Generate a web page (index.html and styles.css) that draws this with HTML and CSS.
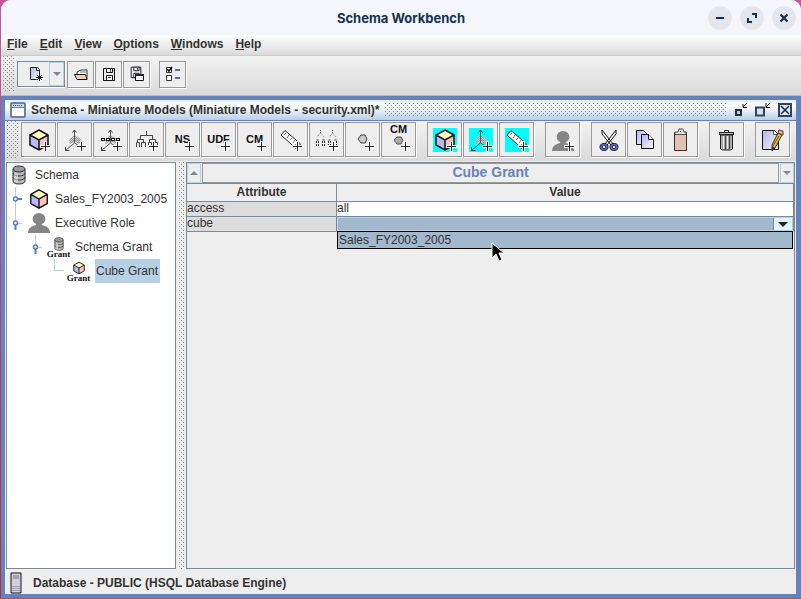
FILE: index.html
```html
<!DOCTYPE html>
<html lang="en">
<head>
  <meta charset="UTF-8" />
  <meta name="viewport" content="width=device-width, initial-scale=1.0" />
  <title>Schema Workbench</title>
  <link rel="stylesheet" href="styles.css">
</head>
<body>
  <!-- shared icon parts -->
  <svg class="defs" width="0" height="0" aria-hidden="true">
    <defs>
      <pattern id="dither" width="2" height="2" patternUnits="userSpaceOnUse">
        <path d="M0 0h1v1H0zM1 1h1v1H1z" fill="#999" />
      </pattern>
      <linearGradient id="page" x1="0" y1="0" x2="1" y2="1">
        <stop offset="0" stop-color="#b5b5e8" /><stop offset="1" stop-color="#f4f4ff" />
      </linearGradient>
      <symbol id="plus" viewBox="0 0 24 24">
        <path d="M18.5 13v11M13 18.5h11" stroke="#fff" stroke-width="3" />
        <path d="M18.5 14v9M14 18.5h9" stroke="#222" />
      </symbol>
      <symbol id="cube" viewBox="0 0 24 24">
        <path d="M12 2l9 5-9 5-9-5z" fill="#ffffc0" />
        <path d="M3 7l9 5v10l-9-5z" fill="#b9b9f5" />
        <path d="M21 7l-9 5v10l9-5z" fill="#ffc0c0" />
        <path d="M12 2l9 5v10l-9 5-9-5V7zM3 7l9 5 9-5M12 12v10" fill="none" stroke="#111" stroke-width="1.5" />
      </symbol>
      <symbol id="axes" viewBox="0 0 24 24">
        <path d="M11.5 7l6 4v5l-6-2-5 2v-5z" fill="#ccc" />
        <path d="M11.5 7l6 4v5l-6-2-5 2v-5z" fill="url(#dither)" />
        <path d="M11.5 2v13L3 22M11.5 15l9 6" fill="none" stroke="#555" />
        <path d="M9.5 4.5l2-2.5 2 2.5M2.5 19v3.5h4" fill="none" stroke="#444" />
      </symbol>
      <symbol id="ruler" viewBox="0 0 24 24">
        <path d="M6 2.5L21.5 16l-4.500 4.5L2 7z" fill="#fff" stroke="#222" />
        <path d="M7 5L5 7M10 7l-2 3M13 10l-2 2M16 12l-2 3M18 15l-2 2" stroke="#777" />
      </symbol>
      <symbol id="person" viewBox="0 0 24 24">
        <ellipse cx="12" cy="7.5" rx="7" ry="6.5" fill="#858585" />
        <path d="M9 12h6v2l5 2q4 2 4 7H0q0-5 4-7l5-2z" fill="#858585" />
      </symbol>
      <symbol id="database" viewBox="0 0 16 20">
        <path d="M2 4v12c0 4 12 4 12 0V4" fill="#b9b9b9" stroke="#333" />
        <ellipse cx="8" cy="4" rx="6" ry="3" fill="#999" stroke="#333" />
        <path d="M2 8c0 4 12 4 12 0M2 12c0 4 12 4 12 0" fill="none" stroke="#333" />
        <path d="M4 8v9M6 9v9" stroke="#e9e9e9" />
      </symbol>
      <symbol id="disk" viewBox="0 0 16 16">
        <path d="M2.5 2.5h11v12h-11z" fill="#eee" stroke="#111" />
        <path d="M5.5 2.5h6v4h-6zM5.5 9.5h6v5h-6z" fill="#fff" stroke="#111" />
        <path d="M9 3h1v3H9zM7 11h3v1H7z" fill="#333" />
      </symbol>
      <symbol id="closed" viewBox="0 0 10 24">
        <path d="M3.5 0v24" stroke="#b8cfe5" />
        <circle cx="3.5" cy="12" r="2" fill="#fff" stroke="#5c7dbd" stroke-width="1.5" />
        <path d="M5 12h5" stroke="#5c7dbd" stroke-width="2" />
      </symbol>
      <symbol id="opened" viewBox="0 0 10 24">
        <path d="M3.5 0v10M6 12.5h4" stroke="#b8cfe5" />
        <circle cx="3.5" cy="12" r="2" fill="#fff" stroke="#5c7dbd" stroke-width="1.5" />
        <path d="M3.5 14v5" stroke="#5c7dbd" stroke-width="2" />
      </symbol>
    </defs>
  </svg>

  <div class="window">
    <header class="titlebar">
      <h1>Schema Workbench</h1>
      <div class="window-buttons">
        <button aria-label="Minimize"><svg width="12" height="12" viewBox="0 0 12 12"><path d="M2 6h8" stroke="#16324f" stroke-width="2" /></svg></button>
        <button aria-label="Restore"><svg width="12" height="12" viewBox="0 0 12 12"><path d="M6 2h4v4M2 6v4h4" fill="none" stroke="#16324f" stroke-width="2" /></svg></button>
        <button aria-label="Close"><svg width="12" height="12" viewBox="0 0 12 12"><path d="M2.5 2.5l7 7M9.5 2.5l-7 7" stroke="#16324f" stroke-width="2.2" /></svg></button>
      </div>
    </header>

    <nav class="menubar">
      <a href="#"><u>F</u>ile</a>
      <a href="#"><u>E</u>dit</a>
      <a href="#"><u>V</u>iew</a>
      <a href="#"><u>O</u>ptions</a>
      <a href="#"><u>W</u>indows</a>
      <a href="#"><u>H</u>elp</a>
    </nav>

    <div class="toolbar main-toolbar">
      <span class="grip"></span>
      <div class="split-button">
        <button class="new" aria-label="New"><svg width="16" height="16" viewBox="0 0 16 16"><path d="M2.5 1.5h7l2 2v10h-9z" fill="url(#page)" stroke="#222" /><path d="M8.5 1.5v3h3" fill="#fff" stroke="#222" /><path d="M11.5 8v7M8 11.5h7M9 9l5 5M14 9l-5 5" stroke="#fff" stroke-width="2.5" /><path d="M11.5 8v7M8 11.5h7M9 9l5 5M14 9l-5 5" stroke="#222" /></svg></button>
        <button class="drop" aria-label="New item list"><svg width="8" height="4" viewBox="0 0 8 4"><path d="M0 0h8L4 4z" fill="#7a8a99" /></svg></button>
      </div>
      <button class="tool" aria-label="Open"><svg width="16" height="16" viewBox="0 0 16 16"><path d="M4 8V6l4-2h6v9" fill="#fff" stroke="#333" /><path d="M1.5 8.5h11l1.500 5H4z" fill="#f3cfb2" stroke="#111" /><path d="M7 6h6" stroke="#777" /></svg></button>
      <button class="tool" aria-label="Save"><svg width="16" height="16"><use href="#disk" /></svg></button>
      <button class="tool" aria-label="Save as"><svg width="16" height="16" viewBox="0 0 16 16"><use href="#disk" x="0" y="-1" width="14" height="14" /><path d="M6.5 8.5h8v6h-8z" fill="#fff" stroke="#111" /><path d="M6 8h9v2H6z" fill="#224" /></svg></button>
      <button class="tool prefs" aria-label="Preferences"><svg width="16" height="16" viewBox="0 0 16 16"><path d="M1.5 1.5h5v5h-5zM1.5 9.5h5v5h-5z" fill="#fff" stroke="#333" /><path d="M2 3l2 2 3-4" fill="none" stroke="#000" stroke-width="1.5" /><path d="M10 4h5M10 12h5" stroke="#6666a0" stroke-width="2" /></svg></button>
    </div>

    <main class="desktop">
      <section class="frame">
        <div class="frame-title">
          <svg width="16" height="16" viewBox="0 0 16 16"><rect x="1" y="1" width="14" height="14" rx="1" fill="#fff" stroke="#6f8299" stroke-width="2" /><path d="M2 2h12v3H2z" fill="#c5d8ea" /><path d="M3 3.5h10" stroke="#4a6078" stroke-dasharray="1 1" /><path d="M2 5.5h12" stroke="#6f8299" /></svg>
          <h2>Schema - Miniature Models (Miniature Models - security.xml)*</h2>
          <span class="bumps"></span>
          <div class="frame-buttons">
            <button aria-label="Iconify"><svg width="16" height="16" viewBox="0 0 16 16"><path d="M3 8h5v5H3z" fill="#b8cfe5" stroke="#1d3040" stroke-width="2" /><path d="M14 1l-4 4M10 2v3.5h4" fill="none" stroke="#111" /></svg></button>
            <button aria-label="Maximize"><svg width="16" height="16" viewBox="0 0 16 16"><path d="M0 5h8v8H0z" transform="translate(1 .5)" fill="#d5e3f0" stroke="#30445a" stroke-width="2" /><path d="M15 1l-4 4M11 1v4.500h4" fill="none" stroke="#111" /></svg></button>
            <button aria-label="Close schema"><svg width="16" height="16" viewBox="0 0 16 16"><path d="M2 2h12v12H2z" fill="#dce8f4" stroke="#30445a" stroke-width="2" /><path d="M4 4l8 8M12 4l-8 8" stroke="#142538" stroke-width="1.5" /></svg></button>
          </div>
        </div>

        <div class="toolbar schema-toolbar">
          <span class="grip"></span>
          <div class="group">
            <button class="tool" aria-label="Add cube"><svg width="24" height="24"><use href="#cube" /><use href="#plus" /></svg></button>
            <button class="tool" aria-label="Add dimension"><svg width="24" height="24"><use href="#axes" /><use href="#plus" /></svg></button>
            <button class="tool" aria-label="Add dimension usage"><svg width="24" height="24"><use href="#axes" /><path d="M2 11.5h19" stroke="#111" stroke-width="3" stroke-dasharray="4 1" /><path d="M3 11.5h17" stroke="#fff" stroke-dasharray="2 3" /><use href="#plus" /></svg></button>
            <button class="tool" aria-label="Add hierarchy"><svg width="24" height="24"><path d="M11.5 3v4M5.5 11V7.5h12V11M2.5 14v-2.5h6V14M14.5 14v-2.5h6V14M1.5 19v-4.500h3V19M6.5 19v-4.500h4V19M13.5 19v-4.500h3V19M18.5 19v-4.500h4V19" fill="none" stroke="#444" /><use href="#plus" /></svg></button>
            <button class="tool word"><span>NS</span><svg width="24" height="24" aria-hidden="true"><use href="#plus" /></svg></button>
            <button class="tool word"><span>UDF</span><svg width="24" height="24" aria-hidden="true"><use href="#plus" /></svg></button>
            <button class="tool word"><span>CM</span><svg width="24" height="24" aria-hidden="true"><use href="#plus" /></svg></button>
            <button class="tool" aria-label="Add measure"><svg width="24" height="24"><use href="#ruler" /><use href="#plus" /></svg></button>
            <button class="tool" aria-label="Add level"><svg width="24" height="24"><path d="M5.5 2v3L2 9M5.5 5L9 9M17.5 2v3L14 9M17.5 5L21 9" fill="none" stroke="#777" stroke-dasharray="1 1" /><path d="M1.5 18v-6h2v6M7.5 18v-6h2v6M13.5 18v-6h2v6M19.5 18v-6h2v6" fill="none" stroke="#333" stroke-dasharray="2 1" /><use href="#plus" /></svg></button>
            <button class="tool" aria-label="Add property"><svg width="24" height="24"><path d="M10 7h4l2 4-2 4h-4l-3-4z" fill="#c9c9c9" stroke="#444" /><use href="#plus" /></svg></button>
            <button class="tool word high"><span>CM</span><svg width="24" height="24" aria-hidden="true"><path d="M10 9h4l2 3-2 4h-4l-3-4z" fill="#aaa" stroke="#555" /><use href="#plus" /></svg></button>
          </div>
          <div class="group">
            <button class="tool cyan" aria-label="Add virtual cube"><svg width="24" height="24"><use href="#cube" /><use href="#plus" /></svg></button>
            <button class="tool cyan" aria-label="Add virtual cube dimension"><svg width="24" height="24"><use href="#axes" /><use href="#plus" /></svg></button>
            <button class="tool cyan" aria-label="Add virtual cube measure"><svg width="24" height="24"><use href="#ruler" /><use href="#plus" /></svg></button>
          </div>
          <div class="group">
            <button class="tool" aria-label="Add role"><svg width="24" height="24"><use href="#person" x="1" y="2" width="22" height="22" /><use href="#plus" /></svg></button>
          </div>
          <div class="group">
            <button class="tool" aria-label="Cut"><svg width="24" height="24"><path d="M5 2v4l9 11 2-1zM19 2v4l-9 11-2-1z" fill="#fff" stroke="#111" /><ellipse cx="7" cy="19" rx="3" ry="2.5" fill="#fff" stroke="#111" stroke-width="3" /><ellipse cx="17" cy="19" rx="3" ry="2.5" fill="#fff" stroke="#111" stroke-width="3" /><ellipse cx="7" cy="19" rx="3" ry="2.5" fill="none" stroke="#6666c8" stroke-width="1.5" /><ellipse cx="17" cy="19" rx="3" ry="2.5" fill="none" stroke="#6666c8" stroke-width="1.5" /></svg></button>
            <button class="tool" aria-label="Copy"><svg width="24" height="24"><path d="M3.5 2.5h7l4 4v10h-11z" fill="url(#page)" stroke="#111" /><path d="M8.5 6.5h7l5 5v9h-12z" fill="url(#page)" stroke="#111" /><path d="M15.5 6.5v5h5" fill="#fff" stroke="#111" /></svg></button>
            <button class="tool" aria-label="Paste"><svg width="24" height="24"><path d="M5.5 4.5h12v18h-12z" fill="#dcc5b5" stroke="#5b2020" /><path d="M6 6.5V4h3l1-3h4l1 3h2v2.5z" fill="#ddd" stroke="#555" /><path d="M11 3h1v1h-1z" fill="#333" /></svg></button>
          </div>
          <div class="group">
            <button class="tool" aria-label="Delete"><svg width="24" height="24"><path d="M5.5 7h12v14l-2 1h-8l-2-1z" fill="#aaa" stroke="#222" /><path d="M4 5.5h15" stroke="#222" stroke-width="3" /><path d="M5 5.5h13" stroke="#bbb" /><path d="M9.5 4V2.5h4V4" fill="none" stroke="#222" /><path d="M8.5 8v13M12.5 8v13" stroke="#eee" /><path d="M10.5 8v13M14.5 8v13" stroke="#444" /></svg></button>
          </div>
          <div class="group">
            <button class="tool" aria-label="Edit XML"><svg width="24" height="24"><path d="M1.5 2.5h12l4 4v15h-16z" fill="url(#page)" stroke="#111" /><path d="M12.5 2.5v4h4" fill="#fff" stroke="#555" /><path d="M17 5l4 2-7 13-3 3v-6z" fill="#e6bd36" stroke="#333" /><path d="M18 2l4 1v4l-5-2z" fill="#efb0a0" stroke="#533" /><path d="M11 18l3 2-3 3z" fill="#333" /><path d="M18 8l-6 10" stroke="#775500" /></svg></button>
          </div>
        </div>

        <div class="split">
          <ul class="tree">
            <li class="level0"><svg width="16" height="20"><use href="#database" /></svg><span>Schema</span></li>
            <li class="level1"><svg class="handle" width="10" height="24"><use href="#closed" /></svg><svg width="22" height="22"><use href="#cube" /></svg><span>Sales_FY2003_2005</span></li>
            <li class="level1"><svg class="handle" width="10" height="24"><use href="#opened" /></svg><svg width="22" height="22"><use href="#person" /></svg><span>Executive Role</span></li>
            <li class="level2"><svg class="handle" width="10" height="24"><use href="#opened" /></svg><span class="grant"><svg width="12" height="14"><use href="#database" /></svg><small>Grant</small></span><span>Schema Grant</span></li>
            <li class="level3"><i class="elbow"></i><span class="grant"><svg width="14" height="14"><use href="#cube" /></svg><small>Grant</small></span><span class="selected">Cube Grant</span></li>
          </ul>
          <div class="divider"></div>
          <div class="editor">
            <div class="editor-head">
              <button aria-label="Scroll up"><svg width="8" height="4" viewBox="0 0 8 4"><path d="M0 4h8L4 0z" fill="#7a8a99" /></svg></button>
              <h3>Cube Grant</h3>
              <button aria-label="Scroll down"><svg width="8" height="4" viewBox="0 0 8 4"><path d="M0 0h8L4 4z" fill="#7a8a99" /></svg></button>
            </div>
            <table class="properties">
              <thead>
                <tr><th>Attribute</th><th>Value</th></tr>
              </thead>
              <tbody>
                <tr><td>access</td><td>all</td></tr>
                <tr>
                  <td><label for="cube-value">cube</label></td>
                  <td class="editing">
                    <div class="combo">
                      <select id="cube-value"><option value=""></option><option>Sales_FY2003_2005</option></select>
                      <span class="arrow"><svg width="10" height="5" viewBox="0 0 10 5"><path d="M0 0h10L5 5z" fill="#222" /></svg></span>
                    </div>
                    <div class="popup">Sales_FY2003_2005
                      <svg class="pointer" width="14" height="20" viewBox="0 0 14 20"><path d="M1 1v15l4-4 3 7 3-1-3-7h5z" fill="#000" stroke="#fff" /></svg>
                    </div>
                  </td>
                </tr>
              </tbody>
            </table>
          </div>
        </div>

        <footer class="status">
          <svg width="12" height="22" viewBox="0 0 12 22"><path d="M1 1h10v20H1z" fill="#d3cedd" stroke="#111" /><path d="M3 4h6M3 6h6" stroke="#777" /><path d="M2 14.5h8M2 16.5h8M2 18.5h8" stroke="#a79ebb" /></svg>
          <span>Database - PUBLIC (HSQL Database Engine)</span>
        </footer>
      </section>
    </main>
  </div>
</body>
</html>
```

FILE: styles.css
```css
* {
  box-sizing: border-box;
}
body {
  margin: 0;
  background: linear-gradient(#c45a9b, #a34a80 50%, #b03038);
  font-family: "Liberation Sans", Arial, sans-serif;
  font-size: 12px;
  color: #333;
}
h1, h2, h3, ul {
  margin: 0;
  padding: 0;
}
button {
  display: flex;
  align-items: center;
  justify-content: center;
  padding: 0;
  font: inherit;
  color: inherit;
}
svg {
  display: block;
  flex: none;
}
.defs {
  position: absolute;
}
.window {
  display: flex;
  flex-direction: column;
  height: 100vh;
  margin-left: 1px;
  border-bottom: 1px solid #9a5a80;
  border-radius: 10px 10px 0 0;
  overflow: hidden;
  background: #eee;
}

/* title bar and menu */
.titlebar {
  display: grid;
  grid-template-columns: 1fr auto 1fr;
  align-items: center;
  height: 35px;
  flex: none;
  padding: 0 5px;
  background: #f5f6fb;
}
.titlebar h1 {
  grid-column: 2;
  font-family: Inter, sans-serif;
  font-size: 13px;
  line-height: 16px;
  color: #16324f;
}
.window-buttons {
  display: flex;
  justify-content: flex-end;
  gap: 8px;
}
.window-buttons button {
  width: 24px;
  height: 24px;
  border: none;
  border-radius: 50%;
  background: #e3e6ec;
}
.menubar {
  display: flex;
  gap: 12px;
  height: 21px;
  flex: none;
  padding-left: 6px;
  line-height: 18px;
  font-weight: bold;
  background: linear-gradient(#fff, #dadada);
  border-bottom: 1px solid #ccc;
}
.menubar a {
  color: #333;
  text-decoration: none;
}

/* toolbars */
.toolbar {
  display: flex;
  align-items: center;
  flex: none;
  background: linear-gradient(#f2f2f2, #dadada);
}
.grip,
.bumps,
.divider {
  --dot: #888;
  background-image:
    conic-gradient(from 270deg at 1px 1px, var(--dot) 90deg, transparent 0),
    conic-gradient(from 270deg at 1px 1px, var(--dot) 90deg, transparent 0);
  background-size: 4px 4px;
  background-position: 0 0, 2px 2px;
}
.grip {
  align-self: stretch;
  width: 11px;
}
.main-toolbar {
  height: 40px;
  padding: 0 2px 3px;
  border-bottom: 1px solid #bbb;
}
.main-toolbar .tool {
  width: 27px;
  height: 27px;
  margin-right: 1px;
}
.main-toolbar .prefs {
  margin-left: 8px;
}
.tool {
  background: #eee;
  border: 1px solid #999;
  box-shadow: 1px 1px #fff;
}
.split-button {
  display: flex;
  width: 48px;
  height: 26px;
  margin: 0 2px 0 3px;
  background: #eee;
  border: 1px solid #7a8a99;
  box-shadow: 1px 1px #fff;
}
.split-button button {
  border: none;
  background: none;
}
.split-button .new {
  flex: 1;
  padding-left: 4px;
}
.split-button .drop {
  width: 15px;
  border: 1px solid #b8cfe5;
}

/* inner frame */
.desktop {
  flex: 1;
  min-height: 0;
  display: flex;
  padding: 4px 5px 4px 4px;
  background: #6682ba;
}
.frame {
  flex: 1;
  min-width: 0;
  display: flex;
  flex-direction: column;
  background: #eee;
}
.frame-title {
  display: flex;
  align-items: center;
  height: 21px;
  flex: none;
  gap: 5px;
  padding: 0 1px 0 5px;
  background: linear-gradient(#e4edf6, #fff 30%, #b8cfe5);
  border-bottom: 1px solid #6382bf;
}
.frame-title h2 {
  font-size: 12px;
  white-space: nowrap;
}
.bumps {
  --dot: #6382bf;
  flex: 1;
  height: 14px;
}
.frame-buttons {
  display: flex;
  gap: 2px;
}
.frame-buttons button {
  width: 20px;
  border: none;
  background: none;
}
.schema-toolbar {
  height: 40px;
  gap: 11px;
  padding: 0 2px 3px;
}
.schema-toolbar .grip {
  margin-right: -8px;
}
.group {
  display: flex;
  gap: 1px;
}
.group .tool {
  width: 35px;
  height: 35px;
}
.cyan svg {
  background: #0ff;
}
.word {
  display: grid;
}
.word > * {
  grid-area: 1 / 1;
}
.word span {
  padding-bottom: 2px;
  font-size: 11px;
  font-weight: bold;
  color: #111;
}
.high span {
  align-self: start;
  line-height: 12px;
}

/* tree and editor */
.split {
  flex: 1;
  min-height: 0;
  display: flex;
  padding: 1px 1px 0;
}
.tree {
  width: 170px;
  list-style: none;
  background: #fff;
  border: 1px solid #7a8a99;
}
.tree li {
  display: flex;
  align-items: center;
  height: 24px;
  gap: 5px;
  white-space: nowrap;
}
.tree .level0 {
  padding-left: 4px;
  gap: 8px;
}
.tree .level1 {
  padding-left: 5px;
}
.tree .level2 {
  padding-left: 25px;
}
.tree .level3 {
  padding-left: 47px;
}
.level1 .handle {
  margin-right: 1px;
}
.elbow {
  align-self: flex-start;
  width: 10px;
  height: 12px;
  margin-right: -2px;
  border-left: 1px solid #b8cfe5;
  border-bottom: 1px solid #b8cfe5;
}
.grant {
  display: flex;
  flex-direction: column;
  align-items: center;
  width: 23px;
}
.grant small {
  font-family: "Liberation Serif", serif;
  font-size: 9px;
  font-weight: bold;
  line-height: 7px;
  color: #111;
}
.selected {
  padding: 0 2px 0 1px;
  line-height: 24px;
  background: #b8cfe5;
}
.divider {
  width: 10px;
  border: solid #eee;
  border-width: 0 2px 0 3px;
}
.editor {
  flex: 1;
  min-width: 0;
  border: 1px solid #7a8a99;
}
.editor-head {
  display: flex;
  height: 21px;
  border-bottom: 1px solid #7a8a99;
}
.editor-head button {
  width: 14px;
  background: #eee;
  border: 1px solid #b8cfe5;
}
.editor-head h3 {
  flex: 1;
  margin: 0 1px;
  border: 1px solid #999;
  font-size: 14px;
  line-height: 17px;
  text-align: center;
  color: #6a84b8;
}
.properties {
  width: 100%;
  table-layout: fixed;
  border-collapse: separate;
  border-spacing: 0;
}
.properties th,
.properties td {
  height: 15px;
  padding: 0;
  line-height: 13px;
  text-align: left;
  vertical-align: top;
  border-bottom: 1px solid #7a8a99;
  border-right: 1px solid #7a8a99;
}
.properties th {
  height: 18px;
  line-height: 17px;
  text-align: center;
}
.properties th:first-child {
  width: 150px;
}
.properties td:first-child {
  background: #dcdcdc;
}
.properties td:last-child {
  background: #fff;
}
.editing {
  position: relative;
}
.combo {
  display: flex;
  height: 14px;
  background: #a3b8cc;
  border: 1px solid #b8cfe5;
}
.combo select {
  flex: 1;
  min-width: 0;
  appearance: none;
  padding: 0;
  border: none;
  background: none;
  font: inherit;
}
.arrow {
  display: flex;
  align-items: center;
  justify-content: center;
  width: 19px;
  background: #dff5fb;
  border-left: 1px solid #7a8a99;
}
.popup {
  position: absolute;
  top: 100%;
  left: 0;
  right: 0;
  height: 18px;
  padding-left: 1px;
  line-height: 16px;
  background: #a3b8cc;
  border: 1px solid #000;
}
.pointer {
  position: absolute;
  top: 10px;
  left: 153px;
}

/* status line */
.status {
  display: flex;
  align-items: center;
  height: 25px;
  flex: none;
  gap: 11px;
  padding: 2px 0 0 5px;
  font-weight: bold;
}
```
